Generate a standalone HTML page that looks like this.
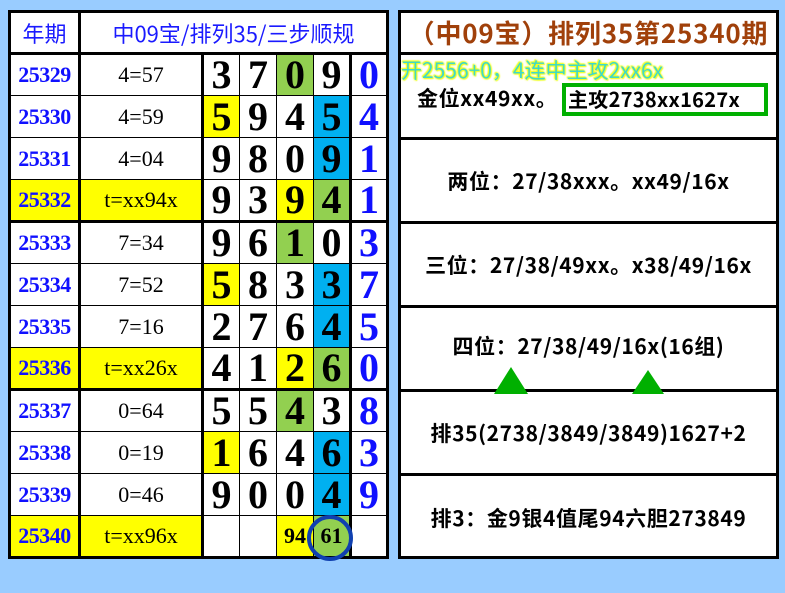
<!DOCTYPE html>
<html><head><meta charset="utf-8"><style>
*{margin:0;padding:0;box-sizing:border-box}
body{width:785px;height:593px;background:#99ccff;position:relative;overflow:hidden}
table{position:absolute;left:8px;top:10px;width:381px;height:549px;border-collapse:collapse;table-layout:fixed;background:#fff;border:3px solid #000}
td{border:1px solid #000;text-align:center;vertical-align:middle;padding:0;overflow:hidden;height:41px}
tr{height:42px}
.h td{height:41px;border-bottom:3px solid #000;color:#1a1aff;font-family:"Noto Sans CJK SC","Liberation Sans",sans-serif;font-size:22px}
.p{color:#1010ff;font-family:"Liberation Serif",serif;font-weight:bold;font-size:22px;border-right:3px solid #000;letter-spacing:-0.5px}
.f{font-family:"Liberation Serif",serif;font-size:22px;border-right:3px solid #000}
.d{font-family:"Liberation Serif",serif;font-weight:bold;font-size:40px;line-height:1}
.b{color:#1010ff;border-left:3px solid #000}
.y{background:#ffff00}.g{background:#92d050}.c{background:#00b0f0}
.tk td{border-bottom:3px solid #000}
.r{position:absolute;left:398px;top:10px;width:381px;height:549px;background:#fff;border:3px solid #000}
.s{position:absolute;left:0;width:375px;border-bottom:3px solid #000;display:flex;align-items:center;justify-content:center;font-family:"Noto Sans CJK SC","Liberation Sans",sans-serif;font-weight:bold;font-size:21px;letter-spacing:0.6px;color:#000;white-space:nowrap}
</style></head><body>
<table>
<colgroup><col style="width:70px"><col style="width:123px"><col style="width:37px"><col style="width:37px"><col style="width:37px"><col style="width:37px"><col style="width:37px"></colgroup>
<tr class="h"><td style="border-right:3px solid #000">年期</td><td colspan="6">中09宝/排列35/三步顺规</td></tr>
<tr><td class="p">25329</td><td class="f">4=57</td><td class="d">3</td><td class="d">7</td><td class="d g">0</td><td class="d">9</td><td class="d b">0</td></tr>
<tr><td class="p">25330</td><td class="f">4=59</td><td class="d y">5</td><td class="d">9</td><td class="d">4</td><td class="d c">5</td><td class="d b">4</td></tr>
<tr><td class="p">25331</td><td class="f">4=04</td><td class="d">9</td><td class="d">8</td><td class="d">0</td><td class="d c">9</td><td class="d b">1</td></tr>
<tr class="tk"><td class="p y">25332</td><td class="f y">t=xx94x</td><td class="d">9</td><td class="d">3</td><td class="d y">9</td><td class="d g">4</td><td class="d b">1</td></tr>
<tr><td class="p">25333</td><td class="f">7=34</td><td class="d">9</td><td class="d">6</td><td class="d g">1</td><td class="d">0</td><td class="d b">3</td></tr>
<tr><td class="p">25334</td><td class="f">7=52</td><td class="d y">5</td><td class="d">8</td><td class="d">3</td><td class="d c">3</td><td class="d b">7</td></tr>
<tr><td class="p">25335</td><td class="f">7=16</td><td class="d">2</td><td class="d">7</td><td class="d">6</td><td class="d c">4</td><td class="d b">5</td></tr>
<tr class="tk"><td class="p y">25336</td><td class="f y">t=xx26x</td><td class="d">4</td><td class="d">1</td><td class="d y">2</td><td class="d g">6</td><td class="d b">0</td></tr>
<tr><td class="p">25337</td><td class="f">0=64</td><td class="d">5</td><td class="d">5</td><td class="d g">4</td><td class="d">3</td><td class="d b">8</td></tr>
<tr><td class="p">25338</td><td class="f">0=19</td><td class="d y">1</td><td class="d">6</td><td class="d">4</td><td class="d c">6</td><td class="d b">3</td></tr>
<tr><td class="p">25339</td><td class="f">0=46</td><td class="d">9</td><td class="d">0</td><td class="d">0</td><td class="d c">4</td><td class="d b">9</td></tr>
<tr><td class="p y">25340</td><td class="f y">t=xx96x</td><td></td><td></td><td class="y" style="font-family:'Liberation Serif',serif;font-weight:bold;font-size:22px">94</td><td class="g" style="font-family:'Liberation Serif',serif;font-weight:bold;font-size:22px">61</td><td class="b"></td></tr>
</table>
<div style="position:absolute;left:307px;top:515px;width:46px;height:46px;border:4px solid #1040b0;border-radius:50%"></div>
<div class="r">
<div class="s" style="top:0;height:42px;color:#a0400a;font-size:26px;letter-spacing:0.8px">（中09宝）排列35第25340期</div>
<div class="s" style="top:42px;height:85px;display:block">
<div style="position:absolute;left:0;top:0px;font-size:21px;letter-spacing:0;font-weight:normal;color:#40d8c8;text-shadow:0 0 2px #ffff00,0 0 2px #ffff00,1px 1px 1px #e0ff40,-1px -1px 1px #e0ff40">开2556+0，4连中主攻2xx6x</div>
<div style="position:absolute;left:16px;top:28px">金位xx49xx。</div>
<div style="position:absolute;left:161px;top:28px;width:206px;height:33px;border:4px solid #00b000;padding-left:2px;line-height:24px;font-size:20px;letter-spacing:0.3px">主攻2738xx1627x</div>
</div>
<div class="s" style="top:127px;height:84px">两位：27/38xxx。xx49/16x</div>
<div class="s" style="top:211px;height:84px">三位：27/38/49xx。x38/49/16x</div>
<div class="s" style="top:295px;height:84px;padding-bottom:6px">四位：27/38/49/16x(16组)</div>
<div class="s" style="top:379px;height:84px">排35(2738/3849/3849)1627+2</div>
<div class="s" style="top:463px;height:84px;border-bottom:none">排3：金9银4值尾94六胆273849</div>
<svg style="position:absolute;left:93px;top:354px" width="35" height="28"><polygon points="17,0 34,27 0,27" fill="#00b000"/></svg>
<svg style="position:absolute;left:231px;top:357px" width="33" height="25"><polygon points="16,0 32,24 0,24" fill="#00b000"/></svg>
</div>
</body></html>
